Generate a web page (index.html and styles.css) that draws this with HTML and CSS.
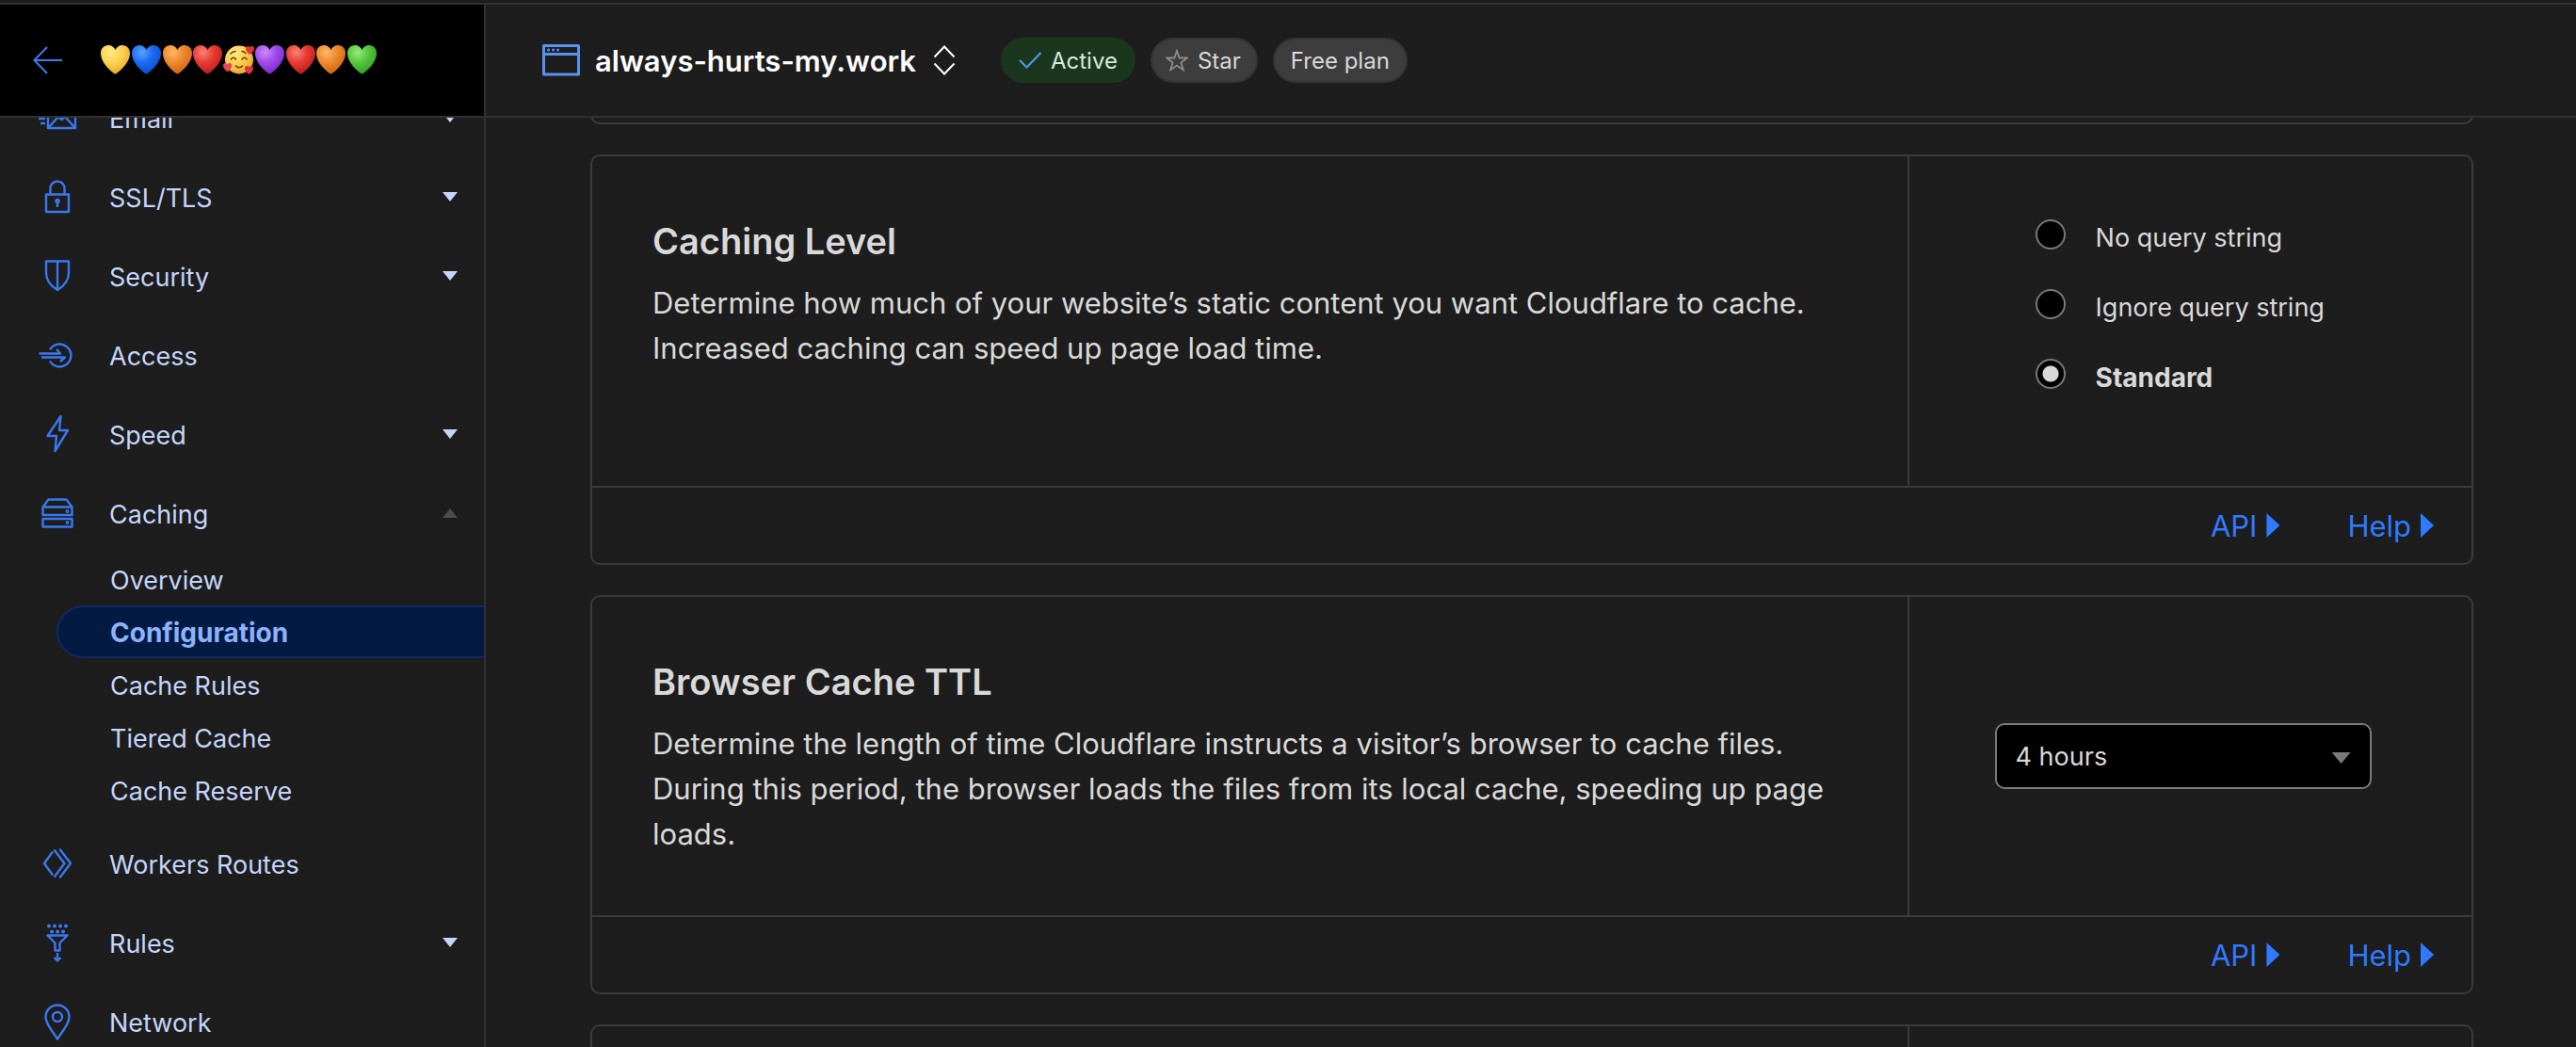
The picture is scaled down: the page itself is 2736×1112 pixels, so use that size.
FILE: index.html
```html
<!DOCTYPE html>
<html lang="en">
<head>
<meta charset="utf-8">
<title>Caching configuration</title>
<link rel="stylesheet" href="styles.css">
</head>
<body>
<svg class="defs" aria-hidden="true">
  <defs>
    <radialGradient id="g-yellow" cx=".35" cy=".25" r=".8"><stop offset="0" stop-color="#ffe98a"/><stop offset=".5" stop-color="#fbd04e"/><stop offset="1" stop-color="#e6a52c"/></radialGradient>
    <radialGradient id="g-blue" cx=".35" cy=".25" r=".8"><stop offset="0" stop-color="#5aa6fb"/><stop offset=".45" stop-color="#1b6cf2"/><stop offset="1" stop-color="#0b4bcd"/></radialGradient>
    <radialGradient id="g-orange" cx=".35" cy=".25" r=".8"><stop offset="0" stop-color="#fdb76a"/><stop offset=".45" stop-color="#ee8a2c"/><stop offset="1" stop-color="#cf5f14"/></radialGradient>
    <radialGradient id="g-red" cx=".35" cy=".25" r=".8"><stop offset="0" stop-color="#fb8377"/><stop offset=".45" stop-color="#e83c33"/><stop offset="1" stop-color="#b81a1c"/></radialGradient>
    <radialGradient id="g-purple" cx=".35" cy=".25" r=".8"><stop offset="0" stop-color="#cc8bfa"/><stop offset=".45" stop-color="#a04bea"/><stop offset="1" stop-color="#7726c8"/></radialGradient>
    <radialGradient id="g-green" cx=".35" cy=".25" r=".8"><stop offset="0" stop-color="#97ea7c"/><stop offset=".45" stop-color="#57c83f"/><stop offset="1" stop-color="#2f9a26"/></radialGradient>
    <path id="heart" d="M15.5 30.500C14 30.500 0 20 0 8.500C0 3.500 3.500 0 8 0C11.500 0 14.300 2 15.500 5C16.700 2 19.500 0 23 0C27.500 0 31 3.500 31 8.500C31 20 17 30.500 15.500 30.500Z"/>
  </defs>
</svg>

<div class="topline"></div>
<div class="app">
  <aside class="sidebar">
    <header class="account">
      <a class="back" href="#" aria-label="Back">
        <svg width="32" height="30" viewBox="0 0 32 30" fill="none" stroke="#3b7cf0" stroke-width="2"><path d="M15 1 1.500 15 15 29M2 15h29"/></svg>
      </a>
      <svg class="account-name" role="img" aria-label="Account name in hearts" width="294" height="32" viewBox="0 0 294 32">
        <use href="#heart" x="0" fill="url(#g-yellow)"/>
        <use href="#heart" x="33" fill="url(#g-blue)"/>
        <use href="#heart" x="66" fill="url(#g-orange)"/>
        <use href="#heart" x="98" fill="url(#g-red)"/>
        <circle cx="147" cy="15.500" r="15" fill="url(#g-yellow)"/>
        <g fill="none" stroke="#6b3d0c" stroke-width="1.600" stroke-linecap="round"><path d="M138.500 15q2.500-3.500 5 0M150 15q2.500-3.500 5 0M143.500 22q3.500 3.500 7 0M138 9q2-2.500 5-2.500M150 6.500q2 0 4 2"/></g>
        <use href="#heart" transform="translate(154 1) scale(.29)" fill="#e0343c"/>
        <use href="#heart" transform="translate(130 19) scale(.3)" fill="#e64a55"/>
        <use href="#heart" transform="translate(153 22) scale(.29)" fill="#e0343c"/>
        <use href="#heart" x="164" fill="url(#g-purple)"/>
        <use href="#heart" x="197" fill="url(#g-red)"/>
        <use href="#heart" x="229" fill="url(#g-orange)"/>
        <use href="#heart" x="262" fill="url(#g-green)"/>
      </svg>
    </header>
    <nav class="nav" aria-label="Site">
      <ul class="nav-list">
        <li><a class="nav-item" href="#">
          <svg class="nav-icon" viewBox="0 0 44 44"><path d="M12 10h29v23H12zM12 33l11-12 3.500 3 3.500-3 11 12M12 10l14.500 14L41 10M2 23h7M4 28h5"/></svg>
          <span>Email</span><i class="caret"></i></a></li>
        <li><a class="nav-item" href="#">
          <svg class="nav-icon" viewBox="0 0 44 44"><path d="M10 19.500h24V38H10zM14.500 19.500V13a7.500 7.500 0 0 1 15 0v6.500M22 27v6"/><circle cx="22" cy="26.500" r="1.500"/></svg>
          <span>SSL/TLS</span><i class="caret"></i></a></li>
        <li><a class="nav-item" href="#">
          <svg class="nav-icon" viewBox="0 0 44 44"><path d="M10 6.500h24v12c0 9-6 15-12 18.500-6-3.500-12-9.500-12-18.500zM22 6.500V37"/></svg>
          <span>Security</span><i class="caret"></i></a></li>
        <li><a class="nav-item" href="#">
          <svg class="nav-icon" viewBox="0 0 44 44"><path d="M14 16.500a12 12 0 1 1 0 12M2.500 20.500H25L21 16M5 24.500h25L25 29"/></svg>
          <span>Access</span></a></li>
        <li><a class="nav-item" href="#">
          <svg class="nav-icon" viewBox="0 0 44 44"><path d="M25.500 3 11.500 24h9.500l-1.500 16 13.500-22H24z"/></svg>
          <span>Speed</span><i class="caret"></i></a></li>
        <li><a class="nav-item" href="#">
          <svg class="nav-icon" viewBox="0 0 44 44"><path d="M6.500 15.500h31v8.500h-31zM6.500 15.500l6-8h19l6 8M6.500 28h31v8.500h-31z"/><circle cx="32.500" cy="20" r=".7"/><circle cx="32.500" cy="32" r=".7"/></svg>
          <span>Caching</span><i class="caret caret-up"></i></a>
          <ul class="sub-list">
            <li><a class="sub-item" href="#">Overview</a></li>
            <li><a class="sub-item sub-item-active" href="#" aria-current="page">Configuration</a></li>
            <li><a class="sub-item" href="#">Cache Rules</a></li>
            <li><a class="sub-item" href="#">Tiered Cache</a></li>
            <li><a class="sub-item" href="#">Cache Reserve</a></li>
          </ul></li>
        <li><a class="nav-item" href="#">
          <svg class="nav-icon" viewBox="0 0 44 44"><path d="M17 9.500 8 22l9 12.500M18.500 7.500 29.500 22 18.500 36.500M24 7.500h1L36 22 25 36.500h-1"/></svg>
          <span>Workers Routes</span></a></li>
        <li><a class="nav-item" href="#">
          <svg class="nav-icon" viewBox="0 0 44 44"><path d="M11.500 14.500h21l-8 8v8h-5v-8zM22 33v8M18.500 38l3.500 3.500 3.500-3.500"/><path class="dots" d="M13 4.500h.1M19 4.500h.1M25 4.500h.1M31 4.500h.1M16 10.500h.1M22 10.500h.1M28 10.500h.1"/></svg>
          <span>Rules</span><i class="caret"></i></a></li>
        <li><a class="nav-item" href="#">
          <svg class="nav-icon" viewBox="0 0 44 44"><path d="M22 40.500C18 34 9.500 25 9.500 17a12.500 12.500 0 0 1 25 0C34.500 25 26 34 22 40.500z"/><circle cx="22" cy="17" r="5"/></svg>
          <span>Network</span></a></li>
      </ul>
    </nav>
  </aside>

  <div class="page">
    <header class="zone">
      <svg class="zone-icon" width="40" height="34" viewBox="0 0 40 34"><path d="M1.500 1.500h37v30.500h-37zM1.500 10.500h37" fill="none" stroke="#5a93ee" stroke-width="3" stroke-linejoin="round"/><path d="M6.500 6h.1M11.500 6h.1M16.500 6h.1" stroke="#5a93ee" stroke-width="3" stroke-linecap="round"/></svg>
      <h1 class="zone-name">always-hurts-my.work</h1>
      <button class="switcher" type="button" aria-label="Switch site">
        <svg width="24" height="32" viewBox="0 0 24 32" fill="none" stroke="#fff" stroke-width="2"><path d="M1.500 12.500 12 1.500l10.500 11M1.500 19.500 12 30.500l10.500-11"/></svg>
      </button>
      <div class="badges">
        <span class="badge badge-active">
          <svg width="24" height="18" viewBox="0 0 24 18" fill="none" stroke="#4f9bea" stroke-width="2"><path d="M1 9 8.500 16.500 23.500 1"/></svg>
          Active</span>
        <button class="badge badge-star" type="button">
          <svg width="24" height="24" viewBox="1 0 24 24" fill="none" stroke="#8c8c8c" stroke-width="1.800"><path d="m13 2 2.600 7.500h8.200l-6.400 5 2.400 7.700L13 17.500l-6.800 4.700 2.400-7.700-6.400-5h8.200z"/></svg>
          Star</button>
        <span class="badge">Free plan</span>
      </div>
    </header>

    <main class="content">
      <section class="card card-scrolled"></section>

      <section class="card">
        <div class="card-body">
          <div class="card-text">
            <h2>Caching Level</h2>
            <p>Determine how much of your website’s static content you want Cloudflare to cache. Increased caching can speed up page load time.</p>
          </div>
          <div class="card-control">
            <div class="radios" role="radiogroup" aria-label="Caching Level">
              <label class="radio"><input type="radio" name="level"><span>No query string</span></label>
              <label class="radio"><input type="radio" name="level"><span>Ignore query string</span></label>
              <label class="radio"><input type="radio" name="level" checked><span>Standard</span></label>
            </div>
          </div>
        </div>
        <footer class="card-footer">
          <a href="#">API<i class="arrow"></i></a>
          <a href="#">Help<i class="arrow"></i></a>
        </footer>
      </section>

      <section class="card">
        <div class="card-body">
          <div class="card-text">
            <h2 id="ttl">Browser Cache TTL</h2>
            <p>Determine the length of time Cloudflare instructs a visitor’s browser to cache files. During this period, the browser loads the files from its local cache, speeding up page loads.</p>
          </div>
          <div class="card-control">
            <div class="select">
              <select aria-labelledby="ttl"><option>4 hours</option></select>
              <i class="select-caret"></i>
            </div>
          </div>
        </div>
        <footer class="card-footer">
          <a href="#">API<i class="arrow"></i></a>
          <a href="#">Help<i class="arrow"></i></a>
        </footer>
      </section>

      <section class="card">
        <div class="card-body">
          <div class="card-text"></div>
          <div class="card-control"></div>
        </div>
      </section>
    </main>
  </div>
</div>
</body>
</html>
```
FILE: styles.css
```css
:root {
  --bg: #1d1d1d;
  --line: #3b3b3b;
  --rule: #313131;
  --text: #d9d9d9;
  --nav: #c5d5fa;
  --link: #2f7bff;
}

* { box-sizing: border-box; }

body {
  display: flex;
  flex-direction: column;
  height: 100vh;
  margin: 0;
  overflow: hidden;
  background: var(--bg);
  color: var(--text);
  font-family: Inter, "Liberation Sans", sans-serif;
  font-size: 27px;
}

h1, h2, p, ul { margin: 0; padding: 0; }
ul { list-style: none; }
a { color: inherit; text-decoration: none; }
button { border: 0; padding: 0; background: none; color: inherit; font: inherit; }
svg { display: block; flex: none; }

.defs { position: absolute; width: 0; height: 0; }

.topline { flex: none; height: 5px; border-bottom: 2px solid var(--rule); }

.app { display: flex; flex: 1; min-height: 0; }

/* Sidebar */
.sidebar {
  display: flex;
  flex: none;
  flex-direction: column;
  width: 516px;
  border-right: 2px solid var(--rule);
}

.account {
  display: flex;
  flex: none;
  align-items: center;
  gap: 40px;
  height: 120px;
  padding: 0 35px;
  border-bottom: 2px solid var(--rule);
  background: #000;
}

.nav { flex: 1; min-height: 0; overflow: hidden; }
.nav-list { margin-top: -42px; }

.nav-item {
  display: flex;
  align-items: center;
  height: 84px;
  padding: 0 28px 0 39px;
  color: var(--nav);
}

.nav-item span { flex: 1; margin-left: 33px; padding-top: 2px; }

.nav-icon {
  width: 44px;
  height: 44px;
  fill: none;
  stroke: #3a78ee;
  stroke-width: 2.4;
  stroke-linejoin: round;
}

.nav-icon .dots { stroke-width: 4; stroke-linecap: round; }

.caret {
  width: 16px;
  height: 10px;
  background: var(--nav);
  clip-path: polygon(0 0, 100% 0, 50% 100%);
}

.caret-up { background: #4c4c50; clip-path: polygon(50% 0, 100% 100%, 0 100%); }

.sub-list { padding: 0 0 8px 60px; }

.sub-item {
  display: flex;
  align-items: center;
  height: 56px;
  padding: 2px 0 0 55px;
  border: 2px solid transparent;
  border-right: 0;
  border-radius: 28px 0 0 28px;
  color: var(--nav);
}

.sub-item-active {
  border-color: #0c2a60;
  background: #031a43;
  color: #8cb2fb;
  font-size: 28px;
  font-weight: 700;
}

/* Zone header */
.page { display: flex; flex: 1; flex-direction: column; min-width: 0; }

.zone {
  display: flex;
  flex: none;
  align-items: center;
  height: 120px;
  padding: 0 60px;
  border-bottom: 2px solid var(--rule);
}

.zone-name {
  margin-left: 16px;
  color: #fff;
  font-size: 31px;
  font-weight: 600;
}

.switcher { margin-left: 18px; }

.badges { display: flex; gap: 16px; margin-left: 48px; }

.badge {
  display: flex;
  align-items: center;
  gap: 10px;
  height: 48px;
  padding: 0 17px;
  border: 2px solid #343434;
  border-radius: 24px;
  background: #3d3d3d;
  font-size: 24px;
}

.badge-active { border-color: #1a371e; background: #1a371e; color: #d3ecd5; }
.badge-star { padding: 0 16px 0 14px; }

/* Settings cards */
.content {
  display: flex;
  flex: 1;
  flex-direction: column;
  gap: 32px;
  min-height: 0;
  padding: 0 109px 0 111px;
  overflow: hidden;
}

.card { flex: none; border: 2px solid var(--line); border-radius: 10px; }
.card-scrolled { height: 82px; margin-top: -75px; }

.card-body { display: grid; grid-template-columns: 70% 30%; }
.card-text { padding: 64px 64px 62px; }

.card h2 {
  margin-bottom: 16px;
  font-size: 38px;
  font-weight: 600;
  line-height: 52px;
}

.card p { font-size: 31px; line-height: 48px; }

.card-control {
  display: flex;
  align-items: center;
  justify-content: center;
  padding: 64px 80px 64px 64px;
  border-left: 2px solid var(--line);
}

.radios { width: 314px; }

.radio {
  display: flex;
  align-items: flex-start;
  gap: 32px;
  margin-bottom: 28px;
  line-height: 46px;
  white-space: nowrap;
}

.radio input {
  flex: none;
  width: 32px;
  height: 32px;
  margin: 3px 0 0;
  border: 2px solid #797979;
  border-radius: 50%;
  background: #000;
  appearance: none;
}

.radio input:checked { background: radial-gradient(circle, #d9d9d9 8px, #000 9px); }
.radio input:checked + span { font-size: 28px; font-weight: 700; }

.select { position: relative; width: 400px; }

.select select {
  display: block;
  width: 100%;
  height: 70px;
  padding: 0 20px;
  border: 2px solid #797979;
  border-radius: 10px;
  background: #000;
  color: var(--text);
  font: inherit;
  appearance: none;
}

.select-caret {
  position: absolute;
  top: 31px;
  right: 22px;
  width: 20px;
  height: 12px;
  background: #797979;
  clip-path: polygon(0 0, 100% 0, 50% 100%);
  pointer-events: none;
}

.card-footer {
  display: flex;
  align-items: center;
  justify-content: flex-end;
  gap: 72px;
  height: 82px;
  padding-right: 40px;
  border-top: 2px solid var(--line);
  color: var(--link);
  font-size: 31px;
}

.card-footer a { display: flex; align-items: center; gap: 10px; }

.arrow {
  width: 14px;
  height: 26px;
  background: var(--link);
  clip-path: polygon(0 0, 100% 50%, 0 100%);
}
```
